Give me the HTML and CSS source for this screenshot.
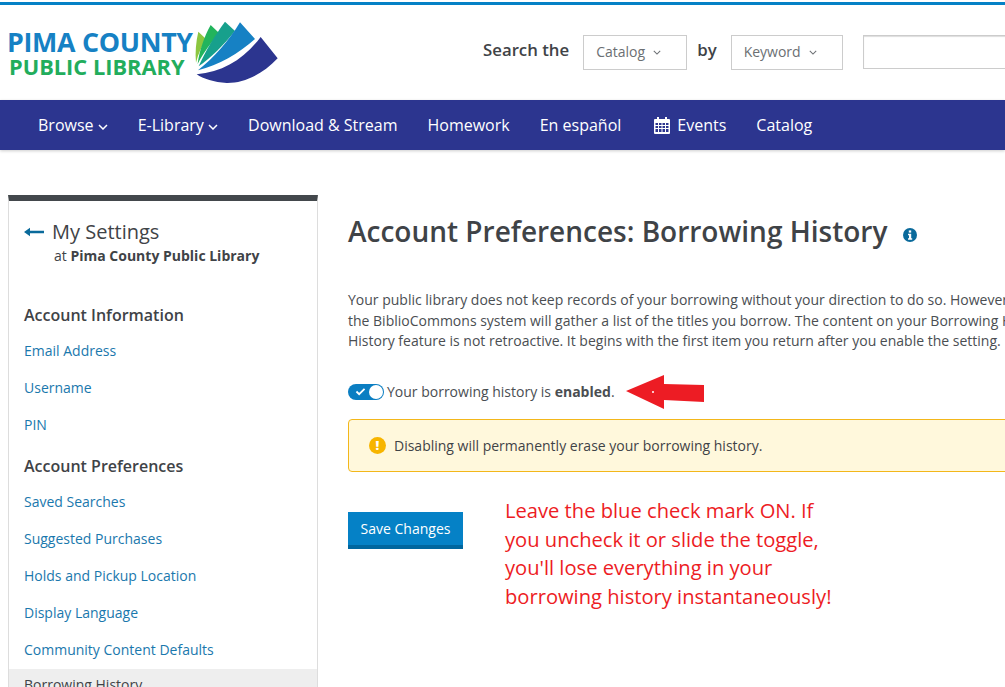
FILE: index.html
```html
<!DOCTYPE html>
<html lang="en">
<head>
<meta charset="utf-8">
<title>Account Preferences: Borrowing History</title>
<link rel="stylesheet" href="styles.css">
</head>
<body>
<header class="header">
  <a class="logo">
    <span class="logo-text">
      <span class="logo-top">PIMA COUNTY</span>
      <span class="logo-bottom">PUBLIC LIBRARY</span>
    </span>
    <svg class="logo-mark" viewBox="0 0 285 225" width="95" height="75">
      <path fill="#8cc63f" d="M25 50L48 72C36 92 25 116 18 143C15 112 18 80 25 50Z"/>
      <path fill="#22b45c" d="M62 30L88 55C64 82 40 114 23 147C28 108 42 66 62 30Z"/>
      <path fill="#17a08c" d="M105 20L135 48C100 92 62 128 26 154C46 108 74 62 105 20Z"/>
      <path fill="#1681c4" d="M150 22L195 72C146 116 86 150 24 166C72 128 118 76 150 22Z"/>
      <path fill="#2c358f" d="M212 66L263 130C216 180 160 205 110 204C72 202 40 192 20 178C100 172 164 130 212 66Z"/>
    </svg>
  </a>
  <form class="search">
    <span class="search-label">Search the</span>
    <span class="select select-catalog">Catalog <svg class="chev" viewBox="0 0 10 6" width="8" height="5"><path d="M1 1l4 4 4-4" fill="none" stroke="currentColor" stroke-width="1.3"/></svg></span>
    <span class="search-label by">by</span>
    <span class="select select-keyword">Keyword <svg class="chev" viewBox="0 0 10 6" width="8" height="5"><path d="M1 1l4 4 4-4" fill="none" stroke="currentColor" stroke-width="1.3"/></svg></span>
    <span class="search-input"></span>
  </form>
</header>
<nav class="nav">
  <a>Browse <svg class="nav-chev" viewBox="0 0 10 6" width="10" height="6"><path d="M1 1l4 4 4-4" fill="none" stroke="currentColor" stroke-width="1.5"/></svg></a>
  <a>E-Library <svg class="nav-chev" viewBox="0 0 10 6" width="10" height="6"><path d="M1 1l4 4 4-4" fill="none" stroke="currentColor" stroke-width="1.5"/></svg></a>
  <a>Download &amp; Stream</a>
  <a>Homework</a>
  <a>En español</a>
  <a class="nav-events">
    <svg viewBox="0 0 16 17" width="16" height="17"><path fill="#fff" fill-rule="evenodd" d="M3 0h2v2h6V0h2v2h2a1 1 0 0 1 1 1v13a1 1 0 0 1-1 1H1a1 1 0 0 1-1-1V3a1 1 0 0 1 1-1h2zM1.500 6v2h2.500V6zM5 6v2h2.500V6zM8.500 6v2H11V6zM12 6v2h2.500V6zM1.500 9v2h2.500V9zM5 9v2h2.500V9zM8.500 9v2H11V9zM12 9v2h2.500V9zM1.500 12v3h2.500v-3zM5 12v3h2.500v-3zM8.500 12v3H11v-3zM12 12v3h2.500v-3z"/></svg>
    Events</a>
  <a>Catalog</a>
</nav>
<div class="page">
  <aside class="sidebar">
    <div class="side-title">
      <svg class="back" viewBox="0 0 20 10" width="20" height="10"><path fill="#0a6a9b" d="M0 5L6 .8V3.800H20V6.200H6V9.200Z"/></svg>
      <div>
        <div class="side-name">My Settings</div>
        <div class="side-sub">at <b>Pima County Public Library</b></div>
      </div>
    </div>
    <h3 class="side-head">Account Information</h3>
    <a class="side-link">Email Address</a>
    <a class="side-link">Username</a>
    <a class="side-link">PIN</a>
    <h3 class="side-head side-head-2">Account Preferences</h3>
    <a class="side-link">Saved Searches</a>
    <a class="side-link">Suggested Purchases</a>
    <a class="side-link">Holds and Pickup Location</a>
    <a class="side-link">Display Language</a>
    <a class="side-link">Community Content Defaults</a>
    <a class="side-link side-current">Borrowing History</a>
  </aside>
  <main class="main">
    <h1 class="title">Account Preferences: Borrowing History
      <svg class="info" viewBox="0 0 14 14" width="14" height="14"><circle cx="7" cy="7" r="7" fill="#0a6a9b"/><rect x="5.800" y="2.400" width="2.400" height="2.200" fill="#fff"/><path fill="#fff" d="M5 5.800h3.200v4.400H9.200v1.500H5v-1.500h1V7.300H5z"/></svg>
    </h1>
    <p class="intro">Your public library does not keep records of your borrowing without your direction to do so. However, if you enable this feature,<br>the BiblioCommons system will gather a list of the titles you borrow. The content on your Borrowing History is private by default.<br>History feature is not retroactive. It begins with the first item you return after you enable the setting.</p>
    <div class="toggle-row">
      <span class="toggle">
        <svg viewBox="0 0 12 10" width="11" height="9"><path d="M1.500 5l3 3 6-6" fill="none" stroke="#fff" stroke-width="2"/></svg>
        <span class="knob"></span>
      </span>
      <span>Your borrowing history is <b>enabled</b>.</span>
    </div>
    <div class="alert">
      <span class="alert-icon">!</span>
      Disabling will permanently erase your borrowing history.
    </div>
    <a class="save">Save Changes</a>
  </main>
</div>
<svg class="arrow" viewBox="0 0 80 36" width="80" height="36"><path fill="#ed1c24" d="M0 17L38 1V10L78 11V28L38 26V35Z"/><circle cx="27" cy="18" r="1" fill="#fff"/></svg>
<p class="note">Leave the blue check mark ON. If<br>you uncheck it or slide the toggle,<br>you'll lose everything in your<br>borrowing history instantaneously!</p>
</body>
</html>
```
FILE: styles.css
```css
* { box-sizing: border-box; }
html, body { height: 100%; }
body {
  margin: 0;
  overflow: hidden;
  background: #fff;
  color: #3f4347;
  font-family: "Open Sans", "Liberation Sans", sans-serif;
  font-size: 14px;
  position: relative;
}
b { font-weight: 700; }
.header {
  height: 100px;
  margin-top: 2px;
  border-top: 3px solid #0581c6;
  display: flex;
  width: 1300px;
}
.logo { display: flex; width: 278px; margin-left: 7px; }
.logo-text { display: flex; flex-direction: column; width: 183px; padding-top: 22px; }
.logo-top {
  color: #1681c4;
  font-size: 26.800px;
  line-height: 30px;
  font-weight: 700;
  letter-spacing: -.3px;
  white-space: nowrap;
}
.logo-bottom {
  color: #22ad5c;
  font-size: 21.800px;
  line-height: 20px;
  font-weight: 700;
  margin-left: 2px;
  white-space: nowrap;
}
.logo-mark { margin-top: 10px; flex: none; }
.search { display: flex; align-items: flex-start; padding-top: 30px; margin-left: 198px; }
.search-label { font-size: 16.800px; font-weight: 600; color: #3f4347; line-height: 30px; }
.by { margin: 0 14px 0 10px; }
.select {
  display: flex;
  align-items: center;
  gap: 8px;
  height: 35px;
  border: 1px solid #ccc;
  padding: 0 0 2px 12px;
  color: #6b6f73;
}
.select-catalog { width: 104px; margin-left: 14px; }
.select-keyword { width: 112px; }
.chev { color: #6b6f73; margin-top: 2px; }
.search-input { width: 300px; height: 34px; margin-left: 20px; border: 1px solid #ccc; box-shadow: inset 0 1px 1px #ddd; }
.nav {
  height: 50px;
  margin-top: -2px;
  background: #2c358f;
  box-shadow: 0 1px 3px rgba(0,0,0,.2);
  display: flex;
  align-items: center;
  gap: 30px;
  padding-left: 38px;
  color: #fff;
  font-size: 16px;
  white-space: nowrap;
}
.nav-chev { vertical-align: 1px; }
.nav-events { display: flex; align-items: center; gap: 7px; margin-left: 3px; }
.page { display: flex; padding: 45px 0 0 8px; width: 1300px; }
.sidebar {
  flex: none;
  width: 310px;
  height: 520px;
  border: solid #ddd;
  border-width: 0 1px;
  border-top: 6px solid #43484c;
  display: flex;
  flex-direction: column;
}
.side-title { display: flex; padding: 19px 15px 0; gap: 8px; }
.back { margin-top: 7px; flex: none; }
.side-name { font-size: 20px; line-height: 24px; color: #3f4347; }
.side-sub { line-height: 24px; margin-left: 2px; color: #3f4347; }
.side-head { margin: 35px 0 0 15px; font-size: 16px; line-height: 24px; font-weight: 600; color: #3f4347; }
.side-head-2 { margin-top: 13.400px; }
.side-link { padding: 0 15px; margin-top: 4.900px; height: 32px; line-height: 32px; color: #1a78ad; flex: none; }
.side-head + .side-link { margin-top: 8px; }
.side-current { background: #eee; color: #3f4347; margin-top: 3px; }
.main { margin-left: 30px; width: 900px; }
.title { margin: 14px 0 0; font-size: 28px; line-height: 44px; font-weight: 600; color: #3f4347; white-space: nowrap; }
.info { margin-left: 8px; vertical-align: 0; }
.intro { margin: 37px 0 0; line-height: 20.500px; white-space: nowrap; color: #4a4e52; }
.toggle-row { display: flex; align-items: center; gap: 3px; margin-top: 28px; height: 24px; color: #4a4e52; }
.toggle {
  width: 36px;
  height: 16px;
  border-radius: 8px;
  background: #0b7ec2;
  display: flex;
  align-items: center;
  justify-content: space-between;
  padding: 0 1px 0 7px;
}
.knob { width: 14px; height: 14px; border-radius: 50%; background: #fff; }
.alert {
  margin-top: 15px;
  height: 53px;
  width: 800px;
  border: 1px solid #f3b71a;
  border-radius: 4px;
  background: #fff8dc;
  display: flex;
  align-items: center;
  padding-left: 20px;
  gap: 8px;
}
.alert-icon {
  width: 17px;
  height: 17px;
  border-radius: 50%;
  background: #f7b500;
  color: #fff;
  font-weight: 800;
  font-size: 13px;
  line-height: 17px;
  text-align: center;
}
.save {
  display: block;
  width: 115px;
  height: 37px;
  margin-top: 40px;
  background: #0581c6;
  border-bottom: 4px solid #00669e;
  color: #fff;
  text-align: center;
  line-height: 33px;
}
.arrow { position: absolute; left: 626px; top: 374px; }
.note {
  position: absolute;
  left: 505px;
  top: 496px;
  margin: 0;
  color: #ed1c24;
  font-size: 20.150px;
  line-height: 28.600px;
  white-space: nowrap;
}
```
